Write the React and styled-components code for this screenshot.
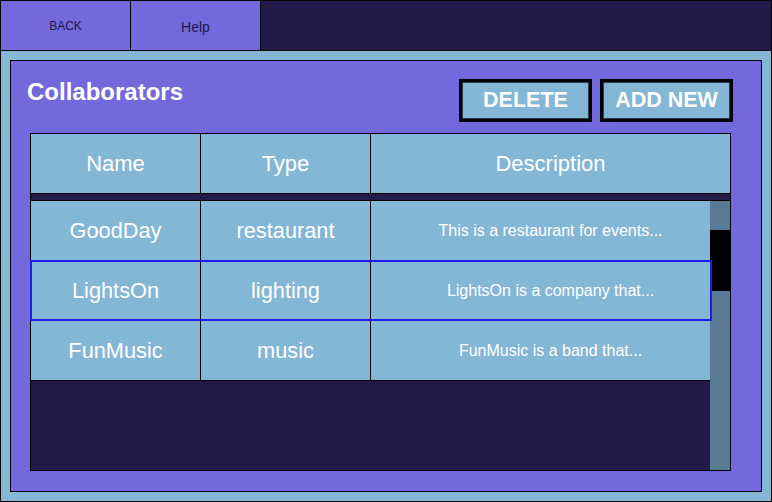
import React, { useState } from 'react'
import styled, { createGlobalStyle } from 'styled-components'

const GlobalStyle = createGlobalStyle`
  body {
    margin: 0;
    font-family: "Liberation Sans", Arial, sans-serif;
  }
`

const collaborators = [
  { name: 'GoodDay', type: 'restaurant', description: 'This is a restaurant for events...' },
  { name: 'LightsOn', type: 'lighting', description: 'LightsOn is a company that...' },
  { name: 'FunMusic', type: 'music', description: 'FunMusic is a band that...' },
]

export default function App() {
  const [selected, setSelected] = useState(1)

  return (
    <Screen>
      <GlobalStyle />
      <NavBar>
        <Tab $size={12} $offset={0}>BACK</Tab>
        <Tab $size={14} $offset={3}>Help</Tab>
      </NavBar>
      <Content>
        <Panel>
          <PanelHeader>
            <Title>Collaborators</Title>
            <Actions>
              <ActionButton>DELETE</ActionButton>
              <ActionButton>ADD NEW</ActionButton>
            </Actions>
          </PanelHeader>
          <Table>
            <HeadRow>
              <HeadCell>Name</HeadCell>
              <HeadCell>Type</HeadCell>
              <HeadCell>Description</HeadCell>
            </HeadRow>
            <Body>
              <Rows>
                {collaborators.map((c, i) => (
                  <Row key={c.name} $active={i === selected} onClick={() => setSelected(i)}>
                    <Cell>{c.name}</Cell>
                    <Cell>{c.type}</Cell>
                    <Cell $small>{c.description}</Cell>
                  </Row>
                ))}
              </Rows>
              <ScrollTrack>
                <ScrollThumb />
              </ScrollTrack>
            </Body>
          </Table>
        </Panel>
      </Content>
    </Screen>
  )
}

const Screen = styled.div`
  width: 772px;
  height: 502px;
  box-sizing: border-box;
  border: 1px solid #000;
  display: flex;
  flex-direction: column;
  background: #84b6d6;
`

const NavBar = styled.div`
  height: 49px;
  flex-shrink: 0;
  display: flex;
  background: #221a48;
  border-bottom: 1px solid #000;
`

const Tab = styled.div`
  width: 130px;
  border-right: 1px solid #000;
  background: #7469dc;
  color: #221a48;
  font-size: ${p => p.$size}px;
  display: flex;
  align-items: center;
  justify-content: center;
  padding-top: ${p => p.$offset}px;
  box-sizing: border-box;
`

const Content = styled.div`
  flex: 1;
  padding: 9px;
  display: flex;
`

const Panel = styled.div`
  flex: 1;
  background: #7469dc;
  border: 1px solid #000;
  padding: 17px 30px 20px 19px;
  display: flex;
  flex-direction: column;
`

const PanelHeader = styled.div`
  display: flex;
  justify-content: space-between;
  align-items: flex-start;
  height: 55px;
  flex-shrink: 0;
`

const Title = styled.h1`
  margin: 0 0 0 -3px;
  color: #fff;
  font-size: 24px;
  font-weight: bold;
  line-height: 28px;
`

const Actions = styled.div`
  display: flex;
  gap: 8px;
  padding-top: 1px;
  margin-right: -2px;
`

const ActionButton = styled.button`
  width: 133px;
  height: 43px;
  box-sizing: border-box;
  border: 3px solid #000;
  outline: 1px solid #2a3b52;
  outline-offset: -4px;
  background: #84b6d6;
  color: #fff;
  font-family: "Liberation Sans", Arial, sans-serif;
  font-size: 21.5px;
  font-weight: bold;
  cursor: pointer;
  padding: 0;
`

const Table = styled.div`
  flex: 1;
  border: 1px solid #000;
  background: #221a48;
  display: flex;
  flex-direction: column;
  min-height: 0;
`

const grid = `
  display: grid;
  grid-template-columns: 170px 170px 1fr;
`

const HeadRow = styled.div`
  ${grid}
  height: 59px;
  background: #84b6d6;
  border-bottom: 1px solid #000;
`

const HeadCell = styled.div`
  display: flex;
  align-items: center;
  justify-content: center;
  color: #fff;
  font-size: 22px;
  padding-top: 1px;
  border-right: 1px solid #000;
  &:last-child {
    border-right: none;
  }
`

const Body = styled.div`
  flex: 1;
  display: flex;
  margin-top: 6px;
  border-top: 1px solid #000;
  min-height: 0;
`

const Rows = styled.div`
  flex: 1;
  display: flex;
  flex-direction: column;
`

const Row = styled.div`
  ${grid}
  height: 60px;
  box-sizing: border-box;
  background: #84b6d6;
  border-bottom: 1px solid #000;
  position: relative;
  cursor: pointer;

  ${p => p.$active && `
    &::after {
      content: '';
      position: absolute;
      inset: -1px -2px -1px -1px;
      border: 2px solid #1c1ce6;
      pointer-events: none;
      z-index: 1;
    }
  `}
`

const Cell = styled.div`
  display: flex;
  align-items: center;
  justify-content: center;
  color: #fff;
  font-size: ${p => (p.$small ? 16 : 21.75)}px;
  padding-left: ${p => (p.$small ? 20 : 0)}px;
  border-right: 1px solid #000;
  &:last-child {
    border-right: none;
  }
`

const ScrollTrack = styled.div`
  width: 20px;
  background: #587a93;
  position: relative;
`

const ScrollThumb = styled.div`
  position: absolute;
  top: 29px;
  left: 0;
  right: 0;
  height: 61px;
  background: #000;
`
